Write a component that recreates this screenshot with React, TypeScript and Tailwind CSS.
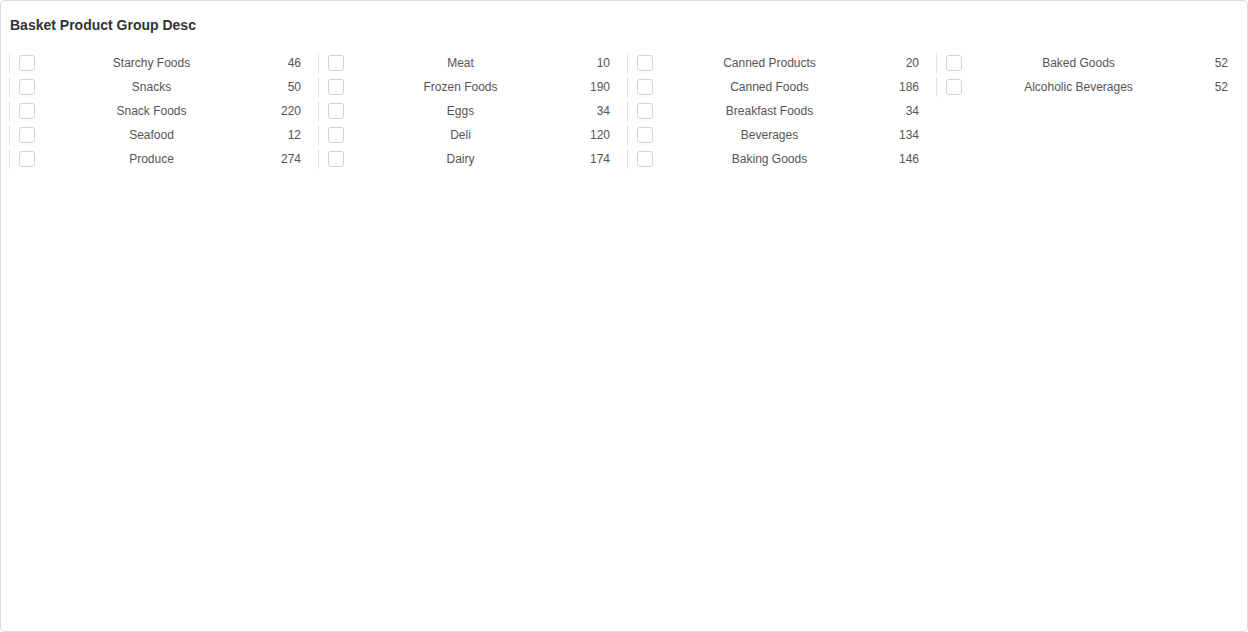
import React from "react";

const cols: [string, number][][] = [
  [["Starchy Foods", 46], ["Snacks", 50], ["Snack Foods", 220], ["Seafood", 12], ["Produce", 274]],
  [["Meat", 10], ["Frozen Foods", 190], ["Eggs", 34], ["Deli", 120], ["Dairy", 174]],
  [["Canned Products", 20], ["Canned Foods", 186], ["Breakfast Foods", 34], ["Beverages", 134], ["Baking Goods", 146]],
  [["Baked Goods", 52], ["Alcoholic Beverages", 52]],
];

export default function App() {
  return (
    <div
      className="w-[1248px] h-[632px] bg-white border border-[#dcdcdc] rounded-[4px] box-border pl-[8px] pt-[15px]"
      style={{ fontFamily: '"Liberation Sans", Arial, sans-serif' }}
    >
      <div className="ml-[1px] text-[14px] leading-[18px] font-bold text-[#333333]">Basket Product Group Desc</div>
      <div className="flex mt-[17px]">
        {cols.map((col, ci) => (
          <div key={ci} className="w-[309px] flex flex-col">
            {col.map(([label, n]) => (
              <div key={label} className="h-[24px] py-[2px]">
                <div className="h-[20px] border-l border-[#e3e3e3] flex items-center">
                  <div className="ml-[9px] w-[16px] h-[16px] rounded-[3px] border border-[#cfd3d8] bg-white shrink-0" />
                  <div className="w-[233px] text-center text-[12px] text-[#555555] whitespace-nowrap">{label}</div>
                  <div className="w-[33px] text-right text-[12px] text-[#555555]">{n}</div>
                </div>
              </div>
            ))}
          </div>
        ))}
      </div>
    </div>
  );
}
